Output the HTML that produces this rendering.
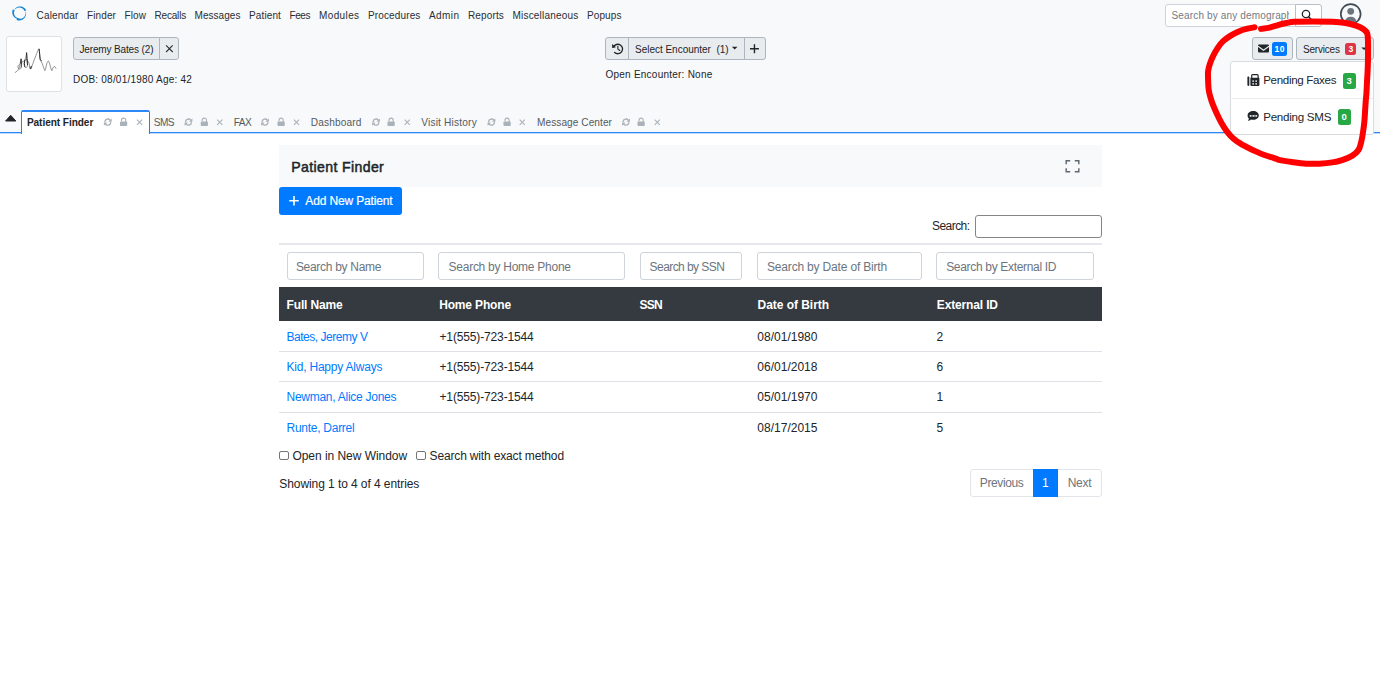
<!DOCTYPE html>
<html><head><meta charset="utf-8"><title>OpenEMR</title>
<style>
html,body{margin:0;padding:0;}
body{width:1380px;height:688px;position:relative;overflow:hidden;background:#fff;font-family:"Liberation Sans",sans-serif;}
.t{position:absolute;white-space:pre;line-height:16px;height:16px;font-family:"Liberation Sans",sans-serif;}
.a{position:absolute;box-sizing:border-box;}
svg{position:absolute;overflow:visible;}
.fi{top:252px;height:27.5px;background:#fff;border:1px solid #ced4da;border-radius:3px;}

</style></head>
<body>
<!-- header background -->
<div class="a" style="left:0;top:0;width:1380px;height:132px;background:#f8f9fa;"></div>
<div class="a" style="left:0;top:132px;width:1380px;height:1px;background:#2c87f7;"></div>
<div class="a" style="left:0;top:133px;width:1380px;height:1px;background:#bcd9fc;"></div>

<!-- patient picture -->
<div class="a" style="left:6px;top:36px;width:56px;height:56px;background:#fff;border:1px solid #dee2e6;border-radius:3px;"></div>

<!-- patient name button group -->
<div class="a" style="left:73px;top:37px;width:87px;height:23px;background:#e9ecef;border:1px solid #adb6bf;border-radius:3px 0 0 3px;"></div>
<div class="a" style="left:159px;top:37px;width:20px;height:23px;background:#e9ecef;border:1px solid #adb6bf;border-radius:0 3px 3px 0;"></div>

<!-- encounter group -->
<div class="a" style="left:605px;top:37px;width:24px;height:23px;background:#e9ecef;border:1px solid #adb6bf;border-radius:3px 0 0 3px;"></div>
<div class="a" style="left:628px;top:37px;width:117px;height:23px;background:#e9ecef;border:1px solid #adb6bf;"></div>
<div class="a" style="left:744px;top:37px;width:22px;height:23px;background:#e9ecef;border:1px solid #adb6bf;border-radius:0 3px 3px 0;"></div>

<!-- top search -->
<div class="a" style="left:1164.6px;top:3.6px;width:131.4px;height:23px;background:#fff;border:1px solid #ced4da;border-radius:3px 0 0 3px;"></div>
<div class="a" style="left:1295px;top:3.6px;width:26.5px;height:23px;background:#fff;border:1px solid #b9c0c7;border-radius:0 3px 3px 0;"></div>

<!-- mail + services buttons -->
<div class="a" style="left:1252px;top:37px;width:41px;height:23px;background:#e9ecef;border:1px solid #adb6bf;border-radius:3px;"></div>
<div class="a" style="left:1296px;top:37px;width:78px;height:23px;background:#e9ecef;border:1px solid #adb6bf;border-radius:3px;"></div>
<div class="a" style="left:1272px;top:41.5px;width:15px;height:14.5px;background:#007bff;border-radius:2.5px;"></div>
<div class="a" style="left:1345px;top:43px;width:11.3px;height:12px;background:#dc3545;border-radius:2.5px;"></div>

<!-- dropdown -->
<div class="a" style="left:1229.5px;top:61px;width:144px;height:73.5px;background:#fff;border:1px solid #d9dcdf;border-radius:3px;"></div>
<div class="a" style="left:1230px;top:98px;width:143px;height:1px;background:#e9ecef;"></div>
<div class="a" style="left:1343px;top:73px;width:12.5px;height:15.5px;background:#28a745;border-radius:2.5px;"></div>
<div class="a" style="left:1338px;top:109.2px;width:12.5px;height:15.5px;background:#28a745;border-radius:2.5px;"></div>

<!-- active tab -->
<div class="a" style="left:21px;top:110px;width:129px;height:24px;background:#fff;border:1px solid #2480f6;border-top:2px solid #2c87f7;border-bottom:none;border-radius:2px 2px 0 0;"></div>

<!-- content: title bar -->
<div class="a" style="left:279px;top:145px;width:822.5px;height:41.5px;background:#f8f9fa;"></div>
<!-- add button -->
<div class="a" style="left:279px;top:186.7px;width:123px;height:28px;background:#007bff;border-radius:3px;"></div>
<!-- search input -->
<div class="a" style="left:975px;top:215px;width:126.5px;height:23px;background:#fff;border:1px solid #858585;border-radius:3px;"></div>
<!-- hr -->
<div class="a" style="left:279px;top:243px;width:822.5px;height:1.5px;background:#e6e8eb;"></div>
<!-- filter inputs -->
<div class="a fi" style="left:286.5px;width:137px;"></div>
<div class="a fi" style="left:438.3px;width:186.7px;"></div>
<div class="a fi" style="left:640.2px;width:101.5px;"></div>
<div class="a fi" style="left:757px;width:164.5px;"></div>
<div class="a fi" style="left:936.2px;width:157.7px;"></div>
<!-- table head -->
<div class="a" style="left:279px;top:287.4px;width:822.5px;height:33.3px;background:#343a40;"></div>
<!-- row separators -->
<div class="a" style="left:279px;top:351px;width:822.5px;height:1px;background:#dee2e6;"></div>
<div class="a" style="left:279px;top:381.3px;width:822.5px;height:1px;background:#dee2e6;"></div>
<div class="a" style="left:279px;top:412px;width:822.5px;height:1px;background:#dee2e6;"></div>
<!-- checkboxes -->
<div class="a" style="left:279.3px;top:450.9px;width:9.6px;height:9.6px;background:#fff;border:1px solid #767676;border-radius:2px;"></div>
<div class="a" style="left:416px;top:450.9px;width:9.6px;height:9.6px;background:#fff;border:1px solid #767676;border-radius:2px;"></div>
<!-- pagination -->
<div class="a" style="left:969.8px;top:469px;width:132px;height:28px;background:#fff;border:1px solid #e1e4e8;border-radius:3px;"></div>
<div class="a" style="left:1032.8px;top:469px;width:25.2px;height:28px;background:#007bff;"></div>

<span class="t" style="left:36.5px;top:8px;font-size:10px;color:#292e33;letter-spacing:0.176px;">Calendar</span>
<span class="t" style="left:87.0px;top:8px;font-size:10px;color:#292e33;letter-spacing:0.107px;">Finder</span>
<span class="t" style="left:124.5px;top:8px;font-size:10px;color:#292e33;letter-spacing:0.094px;">Flow</span>
<span class="t" style="left:154.5px;top:8px;font-size:10px;color:#292e33;letter-spacing:-0.185px;">Recalls</span>
<span class="t" style="left:194.5px;top:8px;font-size:10px;color:#292e33;letter-spacing:0.053px;">Messages</span>
<span class="t" style="left:249.0px;top:8px;font-size:10px;color:#292e33;letter-spacing:0.123px;">Patient</span>
<span class="t" style="left:289.5px;top:8px;font-size:10px;color:#292e33;letter-spacing:-0.434px;">Fees</span>
<span class="t" style="left:319.0px;top:8px;font-size:10px;color:#292e33;letter-spacing:0.384px;">Modules</span>
<span class="t" style="left:368.0px;top:8px;font-size:10px;color:#292e33;letter-spacing:0.136px;">Procedures</span>
<span class="t" style="left:429.0px;top:8px;font-size:10px;color:#292e33;letter-spacing:0.428px;">Admin</span>
<span class="t" style="left:468.0px;top:8px;font-size:10px;color:#292e33;letter-spacing:0.141px;">Reports</span>
<span class="t" style="left:512.5px;top:8px;font-size:10px;color:#292e33;letter-spacing:0.202px;">Miscellaneous</span>
<span class="t" style="left:587.0px;top:8px;font-size:10px;color:#292e33;letter-spacing:0.096px;">Popups</span>
<span class="t" style="left:79.4px;top:42px;font-size:10px;color:#212529;letter-spacing:-0.134px;">Jeremy Bates (2)</span>
<span class="t" style="left:73.0px;top:72px;font-size:10px;color:#212529;letter-spacing:0.218px;">DOB: 08/01/1980 Age: 42</span>
<span class="t" style="left:635.0px;top:42px;font-size:10px;color:#212529;letter-spacing:-0.016px;">Select Encounter  (1)</span>
<span class="t" style="left:605.5px;top:67px;font-size:10px;color:#212529;letter-spacing:0.235px;">Open Encounter: None</span>
<span class="t" style="left:1171.5px;top:8px;font-size:10px;color:#727b83;letter-spacing:0.152px;clip-path:inset(0 3.1px 0 0);">Search by any demograph</span>
<span class="t" style="left:1303.0px;top:42px;font-size:10px;color:#212529;letter-spacing:-0.207px;">Services</span>
<span class="t" style="left:1274.5px;top:41px;font-size:8.5px;font-weight:700;color:#fff;letter-spacing:0.516px;">10</span>
<span class="t" style="left:1348.4px;top:41px;font-size:8.5px;font-weight:700;color:#fff;letter-spacing:0.000px;">3</span>
<span class="t" style="left:1263.2px;top:72px;font-size:11.6px;color:#212529;letter-spacing:-0.342px;">Pending Faxes</span>
<span class="t" style="left:1263.2px;top:109px;font-size:11.6px;color:#212529;letter-spacing:-0.264px;">Pending SMS</span>
<span class="t" style="left:1346.6px;top:73px;font-size:9.5px;font-weight:700;color:#fff;letter-spacing:0.000px;">3</span>
<span class="t" style="left:1341.6px;top:109px;font-size:9.5px;font-weight:700;color:#fff;letter-spacing:0.000px;">0</span>
<span class="t" style="left:26.9px;top:115px;font-size:10.1px;font-weight:700;color:#212529;letter-spacing:-0.065px;">Patient Finder</span>
<span class="t" style="left:153.8px;top:115px;font-size:10.1px;color:#535a61;letter-spacing:-0.542px;">SMS</span>
<span class="t" style="left:233.8px;top:115px;font-size:10.1px;color:#535a61;letter-spacing:-0.609px;">FAX</span>
<span class="t" style="left:310.8px;top:115px;font-size:10.1px;color:#535a61;letter-spacing:0.151px;">Dashboard</span>
<span class="t" style="left:421.2px;top:115px;font-size:10.1px;color:#535a61;letter-spacing:0.203px;">Visit History</span>
<span class="t" style="left:537.0px;top:115px;font-size:10.1px;color:#535a61;letter-spacing:0.067px;">Message Center</span>
<span class="t" style="left:291.2px;top:159px;font-size:14.1px;color:#212529;letter-spacing:0.375px;-webkit-text-stroke:0.5px #212529;">Patient Finder</span>
<span class="t" style="left:305.3px;top:193px;font-size:12px;color:#fff;letter-spacing:-0.146px;-webkit-text-stroke:0.2px #fff;">Add New Patient</span>
<span class="t" style="left:932.0px;top:218px;font-size:12px;color:#212529;letter-spacing:-0.551px;">Search:</span>
<span class="t" style="left:295.9px;top:259px;font-size:12px;color:#6c757d;letter-spacing:-0.291px;">Search by Name</span>
<span class="t" style="left:448.6px;top:259px;font-size:12px;color:#6c757d;letter-spacing:-0.265px;">Search by Home Phone</span>
<span class="t" style="left:649.6px;top:259px;font-size:12px;color:#6c757d;letter-spacing:-0.565px;">Search by SSN</span>
<span class="t" style="left:767.0px;top:259px;font-size:12px;color:#6c757d;letter-spacing:-0.177px;">Search by Date of Birth</span>
<span class="t" style="left:946.2px;top:259px;font-size:12px;color:#6c757d;letter-spacing:-0.320px;">Search by External ID</span>
<span class="t" style="left:286.5px;top:297px;font-size:12px;font-weight:700;color:#fff;letter-spacing:-0.140px;">Full Name</span>
<span class="t" style="left:439.2px;top:297px;font-size:12px;font-weight:700;color:#fff;letter-spacing:-0.164px;">Home Phone</span>
<span class="t" style="left:639.6px;top:297px;font-size:12px;font-weight:700;color:#fff;letter-spacing:-0.763px;">SSN</span>
<span class="t" style="left:757.6px;top:297px;font-size:12px;font-weight:700;color:#fff;letter-spacing:-0.046px;">Date of Birth</span>
<span class="t" style="left:936.8px;top:297px;font-size:12px;font-weight:700;color:#fff;letter-spacing:-0.146px;">External ID</span>
<span class="t" style="left:286.5px;top:329px;font-size:12px;color:#007bff;letter-spacing:-0.469px;">Bates, Jeremy V</span>
<span class="t" style="left:439.5px;top:329px;font-size:12px;color:#212529;letter-spacing:-0.144px;">+1(555)-723-1544</span>
<span class="t" style="left:757.3px;top:329px;font-size:12px;color:#212529;letter-spacing:0.014px;">08/01/1980</span>
<span class="t" style="left:936.4px;top:329px;font-size:12px;color:#212529;letter-spacing:0.000px;">2</span>
<span class="t" style="left:286.5px;top:359px;font-size:12px;color:#007bff;letter-spacing:-0.217px;">Kid, Happy Always</span>
<span class="t" style="left:439.5px;top:359px;font-size:12px;color:#212529;letter-spacing:-0.144px;">+1(555)-723-1544</span>
<span class="t" style="left:757.3px;top:359px;font-size:12px;color:#212529;letter-spacing:0.014px;">06/01/2018</span>
<span class="t" style="left:936.4px;top:359px;font-size:12px;color:#212529;letter-spacing:0.000px;">6</span>
<span class="t" style="left:286.5px;top:389px;font-size:12px;color:#007bff;letter-spacing:-0.265px;">Newman, Alice Jones</span>
<span class="t" style="left:439.5px;top:389px;font-size:12px;color:#212529;letter-spacing:-0.144px;">+1(555)-723-1544</span>
<span class="t" style="left:757.3px;top:389px;font-size:12px;color:#212529;letter-spacing:0.014px;">05/01/1970</span>
<span class="t" style="left:936.4px;top:389px;font-size:12px;color:#212529;letter-spacing:0.000px;">1</span>
<span class="t" style="left:286.5px;top:420px;font-size:12px;color:#007bff;letter-spacing:-0.267px;">Runte, Darrel</span>
<span class="t" style="left:757.3px;top:420px;font-size:12px;color:#212529;letter-spacing:0.014px;">08/17/2015</span>
<span class="t" style="left:936.4px;top:420px;font-size:12px;color:#212529;letter-spacing:0.000px;">5</span>
<span class="t" style="left:292.4px;top:448px;font-size:12px;color:#212529;letter-spacing:-0.038px;">Open in New Window</span>
<span class="t" style="left:429.6px;top:448px;font-size:12px;color:#212529;letter-spacing:-0.157px;">Search with exact method</span>
<span class="t" style="left:279.3px;top:476px;font-size:12px;color:#212529;letter-spacing:-0.078px;">Showing 1 to 4 of 4 entries</span>
<span class="t" style="left:979.8px;top:475px;font-size:12px;color:#6c757d;letter-spacing:-0.386px;">Previous</span>
<span class="t" style="left:1041.9px;top:475px;font-size:12px;color:#fff;letter-spacing:0.000px;">1</span>
<span class="t" style="left:1067.7px;top:475px;font-size:12px;color:#6c757d;letter-spacing:-0.247px;">Next</span>
<svg width="1380" height="688" viewBox="0 0 1380 688" style="left:0;top:0;pointer-events:none"><path d="M20.70 18.42L20.19 18.62L19.65 18.76L19.09 18.86L18.52 18.90L17.93 18.88L17.35 18.79L16.76 18.65L16.19 18.45L15.63 18.18L15.09 17.86L14.59 17.47L14.12 17.04L13.68 16.55L13.30 16.01L12.97 15.43L12.69 14.81L12.48 14.15L12.33 13.47L12.25 12.77L12.24 12.06L12.31 11.34L12.44 10.62L12.65 9.92L12.94 9.23L14.72 10.34L14.48 10.82L14.29 11.32L14.15 11.83L14.07 12.36L14.03 12.88L14.05 13.41L14.12 13.92L14.24 14.43L14.40 14.92L14.61 15.39L14.87 15.84L15.17 16.26L15.51 16.64L15.88 16.99L16.28 17.30L16.71 17.57L17.16 17.80L17.63 17.98L18.12 18.12L18.61 18.21L19.11 18.26L19.62 18.26L20.12 18.23L20.63 18.17ZM14.49 9.44L14.80 9.00L15.14 8.58L15.52 8.19L15.94 7.83L16.40 7.50L16.88 7.22L17.40 6.98L17.93 6.78L18.49 6.62L19.07 6.52L19.65 6.47L20.25 6.47L20.84 6.52L21.44 6.62L22.03 6.78L22.60 6.99L23.16 7.25L23.70 7.57L24.22 7.93L24.70 8.34L25.15 8.79L25.56 9.29L25.93 9.82L26.25 10.39L24.49 11.10L24.29 10.66L24.04 10.24L23.77 9.83L23.45 9.46L23.11 9.11L22.74 8.80L22.34 8.51L21.92 8.26L21.49 8.05L21.03 7.88L20.56 7.75L20.08 7.65L19.59 7.60L19.10 7.59L18.61 7.62L18.13 7.69L17.65 7.80L17.18 7.96L16.73 8.15L16.28 8.37L15.86 8.64L15.46 8.93L15.07 9.26L14.69 9.60ZM25.85 11.81L25.98 12.40L26.06 13.00L26.07 13.61L26.04 14.23L25.95 14.84L25.80 15.44L25.60 16.03L25.34 16.60L25.04 17.14L24.68 17.66L24.28 18.15L23.83 18.60L23.34 19.01L22.82 19.38L22.26 19.69L21.67 19.96L21.06 20.18L20.43 20.34L19.78 20.44L19.13 20.48L18.47 20.47L17.82 20.39L17.17 20.26L16.53 20.06L17.16 18.48L17.64 18.67L18.14 18.82L18.65 18.92L19.17 18.98L19.69 18.99L20.21 18.95L20.73 18.87L21.24 18.74L21.74 18.56L22.23 18.34L22.69 18.08L23.14 17.77L23.55 17.43L23.94 17.04L24.29 16.63L24.60 16.18L24.88 15.70L25.11 15.20L25.30 14.68L25.45 14.14L25.55 13.58L25.61 13.02L25.62 12.44L25.61 11.86Z" fill="#1986d2"/><path d="M15.3 72.4C15.6 72.2 16.6 71.6 17.1 71.1C17.6 70.6 18.0 70.1 18.4 69.3C18.8 68.5 19.3 67.5 19.7 66.3C20.1 65.0 20.3 63.2 20.6 61.9C20.8 60.6 20.9 58.7 21.1 58.7C21.3 58.7 21.7 60.5 21.7 61.9C21.7 63.3 21.6 65.9 21.3 67.1C21.0 68.3 20.4 68.9 19.9 69.1C19.4 69.2 18.7 68.7 18.4 68.2C18.1 67.7 17.7 66.8 18.0 66.1C18.2 65.3 19.3 64.4 20.1 63.7C20.9 62.9 22.0 62.3 22.7 61.7C23.5 61.2 24.2 61.1 24.8 60.2C25.3 59.2 25.7 57.5 26.0 56.2C26.3 55.0 26.5 52.2 26.7 52.6C26.8 52.9 26.9 56.4 27.0 58.4C27.2 60.5 27.7 63.4 27.5 65.0C27.4 66.5 26.6 67.4 26.2 67.7C25.7 67.9 24.9 67.1 24.6 66.4C24.3 65.8 24.2 64.7 24.2 63.7C24.3 62.6 24.5 60.8 24.9 60.2C25.4 59.5 26.2 59.3 26.8 59.7C27.5 60.2 28.4 61.7 28.9 62.8C29.3 63.8 29.5 65.0 29.8 66.1C30.1 67.1 30.1 69.5 30.6 69.1C31.1 68.7 31.9 65.9 32.8 63.7C33.7 61.4 34.8 58.3 35.8 55.8C36.8 53.3 38.3 49.1 38.9 48.8C39.5 48.5 39.4 52.3 39.6 54.1C39.8 55.8 39.6 57.7 40.1 59.3C40.6 60.9 41.7 62.3 42.4 63.8C43.0 65.4 43.5 67.3 43.9 68.4C44.4 69.6 44.6 70.8 45.0 70.6C45.3 70.4 45.7 68.4 46.0 67.1C46.4 65.9 46.5 64.2 46.9 63.2C47.3 62.2 47.9 61.0 48.3 61.0C48.7 61.0 49.2 62.3 49.5 63.2C49.9 64.2 50.0 65.5 50.4 66.7C50.8 67.9 51.4 70.3 51.8 70.6C52.2 70.9 52.4 69.0 52.7 68.4C53.0 67.9 53.2 67.4 53.5 67.1C53.9 66.8 54.5 66.5 54.9 66.7C55.3 66.9 55.7 68.2 55.9 68.4" fill="none" stroke="#3a3a3a" stroke-width="0.55" stroke-linejoin="round" stroke-linecap="round"/><path d="M26.5 53.0C26.6 53.9 26.8 56.5 26.9 58.4C27.1 60.4 27.4 63.7 27.5 64.7" fill="none" stroke="#222" stroke-width="1.0" stroke-linecap="round"/><path d="M24.9 60.2C24.8 60.7 24.3 62.6 24.3 63.7C24.3 64.7 24.8 66.2 24.9 66.7" fill="none" stroke="#222" stroke-width="1.0" stroke-linecap="round"/><path d="M39.1 49.3C39.2 50.1 39.5 52.8 39.7 54.5C39.9 56.2 40.0 58.4 40.3 59.5C40.6 60.5 41.3 60.4 41.5 60.6" fill="none" stroke="#222" stroke-width="1.0" stroke-linecap="round"/><path d="M20.4 62.8C20.5 62.1 20.9 58.9 21.1 58.9C21.3 58.9 21.5 61.4 21.5 62.8C21.5 64.2 21.2 66.4 21.1 67.1" fill="none" stroke="#222" stroke-width="0.7" stroke-linecap="round"/><path d="M30.0 66.7C30.1 67.1 30.3 68.9 30.6 68.9C30.9 68.8 31.5 66.8 31.7 66.4" fill="none" stroke="#222" stroke-width="0.8" stroke-linecap="round"/><path d="M166.1 45.4L172.7 52M172.7 45.4L166.1 52" stroke="#2b3035" stroke-width="1.1" fill="none"/><g fill="none" stroke="#212529" stroke-width="1.35" stroke-linecap="round" stroke-linejoin="round"><path d="M613.6 47.0A4.7 4.7 0 1 1 614.6 52.4"/><path d="M617.9 46.2V49.1L619.8 50.5" stroke-width="1.15"/></g><path d="M612.0 43.9L612.2 47.9L616.0 47.3Z" fill="#212529"/><path d="M731.9 46.8h5.6l-2.8 2.6z" fill="#212529"/><path d="M750 48.75h8.9M754.45 44.3v8.9" stroke="#212529" stroke-width="1.4" fill="none"/><circle cx="1306" cy="14.0" r="3.7" fill="none" stroke="#212529" stroke-width="1.3"/><path d="M1308.7 16.8L1311.2 19.4" stroke="#212529" stroke-width="1.5" stroke-linecap="round"/><circle cx="1350.7" cy="14.0" r="9.9" fill="none" stroke="#3f4a54" stroke-width="1.7"/><circle cx="1350.7" cy="11.3" r="3.4" fill="#6c757d"/><path d="M1344.9 21.6a5.9 5.9 0 0 1 11.6 0a9.9 9.9 0 0 1 -11.6 0z" fill="#6c757d"/><rect x="1258" y="44.6" width="11" height="8" rx="1" fill="#212529"/><path d="M1258 46.3L1263.5 50.3L1269 46.3" fill="none" stroke="#e9ecef" stroke-width="1.1"/><path d="M1361.3 47.5h5.6l-2.8 2.6z" fill="#212529"/><g fill="#212529"><rect x="1247.4" y="76.6" width="1.9" height="9.3" rx="0.8"/><rect x="1250.4" y="77.6" width="9.0" height="8.3" rx="0.9"/></g><path d="M1251.7 78.4v-2.9a0.9 0.9 0 0 1 0.9 -0.9h4.6a0.9 0.9 0 0 1 0.9 0.9v2.9z" fill="#fff" stroke="#212529" stroke-width="1.2"/><g fill="#fff"><rect x="1252.4" y="80.4" width="1.5" height="1.4"/><rect x="1255.4" y="80.4" width="1.5" height="1.4"/><rect x="1252.4" y="83.2" width="1.5" height="1.4"/><rect x="1255.4" y="83.2" width="1.5" height="1.4"/></g><path d="M1253.2 111.1c3.1 0 5.6 1.9 5.6 4.3s-2.5 4.3 -5.6 4.3c-0.8 0 -1.5 -0.1 -2.2 -0.3c-0.8 0.8 -1.9 1.3 -3.2 1.4c0.6 -0.7 1.0 -1.5 1.1 -2.3c-0.8 -0.8 -1.3 -1.9 -1.3 -3.1c0 -2.4 2.5 -4.3 5.6 -4.3z" fill="#212529"/><g fill="#fff" opacity="0.88"><rect x="1249.6" y="115.0" width="2.0" height="1.8" rx="0.5"/><rect x="1252.4" y="115.0" width="2.3" height="1.8" rx="0.5"/><rect x="1255.3" y="115.0" width="1.9" height="1.8" rx="0.5"/></g><path d="M5.6 121.0L10.7 115.3L15.8 121.0Z" fill="#212529" stroke="#212529" stroke-width="1.0" stroke-linejoin="round"/><g fill="none" stroke="#a9b1b9" stroke-width="1.35" stroke-linecap="round"><path d="M104.90 121.60A2.9 2.9 0 0 1 110.10 120.20"/><path d="M110.70 122.60A2.9 2.9 0 0 1 105.50 124.00"/></g><path fill="#a9b1b9" d="M111.70 118.40v3.4h-3.4z M103.90 125.80v-3.4h3.4z"/><rect x="120.00" y="121.4" width="7.2" height="4.7" rx="0.8" fill="#a9b1b9"/><path d="M125.70 121.6v-1.4a2.1 2.1 0 0 0 -4.2 0v0.5" fill="none" stroke="#a9b1b9" stroke-width="1.1" stroke-linecap="round"/><path d="M136.95 119.60L142.15 124.80M142.15 119.60L136.95 124.80" stroke="#a9b1b9" stroke-width="1.1" fill="none"/><g fill="none" stroke="#a9b1b9" stroke-width="1.35" stroke-linecap="round"><path d="M185.60 121.60A2.9 2.9 0 0 1 190.80 120.20"/><path d="M191.40 122.60A2.9 2.9 0 0 1 186.20 124.00"/></g><path fill="#a9b1b9" d="M192.40 118.40v3.4h-3.4z M184.60 125.80v-3.4h3.4z"/><rect x="200.75" y="121.4" width="7.2" height="4.7" rx="0.8" fill="#a9b1b9"/><path d="M206.45 121.6v-1.4a2.1 2.1 0 0 0 -4.2 0v0.5" fill="none" stroke="#a9b1b9" stroke-width="1.1" stroke-linecap="round"/><path d="M217.15 119.60L222.35 124.80M222.35 119.60L217.15 124.80" stroke="#a9b1b9" stroke-width="1.1" fill="none"/><g fill="none" stroke="#a9b1b9" stroke-width="1.35" stroke-linecap="round"><path d="M262.10 121.60A2.9 2.9 0 0 1 267.30 120.20"/><path d="M267.90 122.60A2.9 2.9 0 0 1 262.70 124.00"/></g><path fill="#a9b1b9" d="M268.90 118.40v3.4h-3.4z M261.10 125.80v-3.4h3.4z"/><rect x="277.50" y="121.4" width="7.2" height="4.7" rx="0.8" fill="#a9b1b9"/><path d="M283.20 121.6v-1.4a2.1 2.1 0 0 0 -4.2 0v0.5" fill="none" stroke="#a9b1b9" stroke-width="1.1" stroke-linecap="round"/><path d="M293.90 119.60L299.10 124.80M299.10 119.60L293.90 124.80" stroke="#a9b1b9" stroke-width="1.1" fill="none"/><g fill="none" stroke="#a9b1b9" stroke-width="1.35" stroke-linecap="round"><path d="M373.10 121.60A2.9 2.9 0 0 1 378.30 120.20"/><path d="M378.90 122.60A2.9 2.9 0 0 1 373.70 124.00"/></g><path fill="#a9b1b9" d="M379.90 118.40v3.4h-3.4z M372.10 125.80v-3.4h3.4z"/><rect x="387.50" y="121.4" width="7.2" height="4.7" rx="0.8" fill="#a9b1b9"/><path d="M393.20 121.6v-1.4a2.1 2.1 0 0 0 -4.2 0v0.5" fill="none" stroke="#a9b1b9" stroke-width="1.1" stroke-linecap="round"/><path d="M404.65 119.60L409.85 124.80M409.85 119.60L404.65 124.80" stroke="#a9b1b9" stroke-width="1.1" fill="none"/><g fill="none" stroke="#a9b1b9" stroke-width="1.35" stroke-linecap="round"><path d="M488.60 121.60A2.9 2.9 0 0 1 493.80 120.20"/><path d="M494.40 122.60A2.9 2.9 0 0 1 489.20 124.00"/></g><path fill="#a9b1b9" d="M495.40 118.40v3.4h-3.4z M487.60 125.80v-3.4h3.4z"/><rect x="503.50" y="121.4" width="7.2" height="4.7" rx="0.8" fill="#a9b1b9"/><path d="M509.20 121.6v-1.4a2.1 2.1 0 0 0 -4.2 0v0.5" fill="none" stroke="#a9b1b9" stroke-width="1.1" stroke-linecap="round"/><path d="M519.65 119.60L524.85 124.80M524.85 119.60L519.65 124.80" stroke="#a9b1b9" stroke-width="1.1" fill="none"/><g fill="none" stroke="#a9b1b9" stroke-width="1.35" stroke-linecap="round"><path d="M623.10 121.60A2.9 2.9 0 0 1 628.30 120.20"/><path d="M628.90 122.60A2.9 2.9 0 0 1 623.70 124.00"/></g><path fill="#a9b1b9" d="M629.90 118.40v3.4h-3.4z M622.10 125.80v-3.4h3.4z"/><rect x="637.50" y="121.4" width="7.2" height="4.7" rx="0.8" fill="#a9b1b9"/><path d="M643.20 121.6v-1.4a2.1 2.1 0 0 0 -4.2 0v0.5" fill="none" stroke="#a9b1b9" stroke-width="1.1" stroke-linecap="round"/><path d="M654.65 119.60L659.85 124.80M659.85 119.60L654.65 124.80" stroke="#a9b1b9" stroke-width="1.1" fill="none"/><path d="M1066.2 164.2v-3.5h4.0M1074.8 160.7h4.0v3.5M1078.8 168.2v3.5h-4.0M1070.2 171.7h-4.0v-3.5" fill="none" stroke="#5f6870" stroke-width="1.45"/><path d="M289.2 200.8h9.6M294 196v9.6" stroke="#fff" stroke-width="1.6" fill="none"/><path d="M1261.0 28.9C1262.4 28.7 1266.6 28.3 1269.6 27.6C1272.5 26.9 1275.9 25.7 1278.7 24.9C1281.5 24.1 1283.9 23.5 1286.5 23.0C1289.1 22.5 1290.0 22.1 1294.4 21.8C1298.8 21.6 1306.4 21.5 1312.7 21.5C1319.0 21.5 1327.0 21.6 1332.4 21.8C1337.9 22.1 1341.5 22.4 1345.4 23.0C1349.3 23.6 1352.9 24.6 1355.9 25.6C1358.9 26.6 1361.7 27.9 1363.6 29.2C1365.5 30.5 1366.6 31.4 1367.3 33.6C1368.0 35.9 1367.9 39.0 1368.0 42.7C1368.1 46.4 1368.0 51.4 1368.0 55.8C1368.0 60.2 1367.9 64.5 1367.7 68.9C1367.5 73.3 1367.2 77.8 1367.0 82.0C1366.8 86.2 1366.6 90.5 1366.4 93.8C1366.2 97.0 1365.9 98.7 1365.7 101.5C1365.5 104.3 1365.3 107.4 1365.1 110.7C1364.9 114.0 1364.7 117.7 1364.4 121.2C1364.1 124.7 1363.6 128.1 1363.1 131.6C1362.6 135.1 1362.0 139.0 1361.2 142.1C1360.4 145.2 1360.0 147.7 1358.5 150.0C1357.0 152.3 1354.6 154.3 1352.0 155.9C1349.4 157.5 1346.1 158.7 1342.8 159.8C1339.5 160.9 1336.3 161.8 1332.4 162.4C1328.5 163.1 1323.7 163.5 1319.3 163.7C1314.9 163.9 1311.0 164.0 1306.2 163.7C1301.4 163.4 1294.9 162.4 1290.5 161.8C1286.1 161.2 1282.8 160.9 1280.0 160.2C1277.2 159.5 1276.3 158.8 1273.5 157.8C1270.7 156.9 1266.5 155.8 1263.0 154.5C1259.5 153.2 1256.1 151.5 1252.6 149.9C1249.1 148.3 1245.3 146.5 1242.1 144.7C1238.9 142.8 1236.1 141.0 1233.6 138.8C1231.1 136.6 1229.1 134.3 1227.0 131.6C1224.9 128.9 1222.9 125.5 1221.2 122.5C1219.5 119.5 1218.0 116.3 1216.6 113.3C1215.2 110.2 1213.8 107.0 1212.7 104.2C1211.6 101.4 1210.9 98.9 1210.2 96.5C1209.5 94.1 1209.1 92.3 1208.7 89.6C1208.3 86.9 1208.2 83.5 1208.1 80.4C1208.0 77.4 1207.8 74.1 1208.1 71.3C1208.4 68.5 1209.1 66.0 1210.0 63.4C1210.9 60.8 1212.0 58.2 1213.3 55.6C1214.6 53.0 1216.3 50.1 1217.9 47.7C1219.5 45.3 1221.0 43.2 1223.1 41.2C1225.2 39.2 1227.8 37.5 1230.3 35.9C1232.8 34.3 1235.4 32.9 1238.2 31.7C1241.0 30.5 1244.6 29.4 1247.3 28.7C1250.0 28.0 1253.4 27.5 1254.6 27.3" fill="none" stroke="#fe0000" stroke-width="6" stroke-linecap="round" stroke-linejoin="round"/></svg>
</body></html>
